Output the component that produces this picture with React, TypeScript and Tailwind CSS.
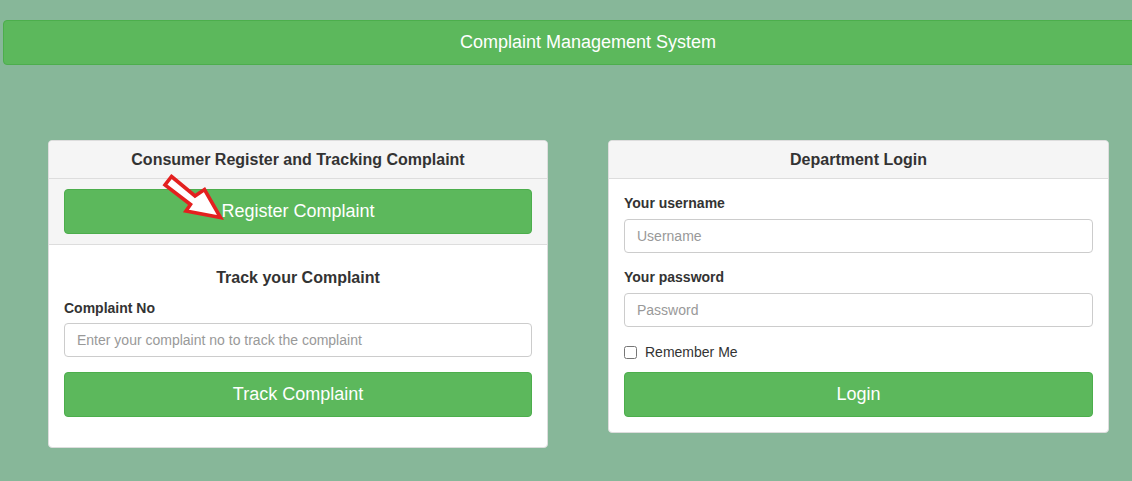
import React from "react";

export default function App() {
  const font = { fontFamily: '"Liberation Sans", Arial, sans-serif' };
  return (
    <div
      className="w-[1132px] h-[481px] overflow-hidden bg-[#87b799] pt-[20px] text-[#333]"
      style={font}
    >
      <div className="ml-[3px] w-[1170px] h-[45px] rounded-[4px] border border-[#4cae4c] bg-[#5cb85c] flex items-center justify-center text-white text-[18px]">
        Complaint Management System
      </div>

      <div className="flex items-start gap-[60px] ml-[48px] mt-[75px]">
        {/* Left panel */}
        <div className="relative w-[500px] rounded-[4px] border border-[#ddd] bg-white">
          <div className="h-[38px] bg-[#f5f5f5] border-b border-[#ddd] rounded-t-[4px] flex items-center justify-center font-bold text-[16px]">
            Consumer Register and Tracking Complaint
          </div>
          <div className="bg-[#f5f5f5] border-b border-[#ddd] px-[15px] pt-[10px] pb-[10px]">
            <button className="w-full h-[45px] rounded-[4px] border border-[#4cae4c] bg-[#5cb85c] text-white text-[18px]">
              Register Complaint
            </button>
          </div>
          <div className="px-[15px] pt-[22px] pb-[30px]">
            <div className="text-center font-bold text-[16px] leading-[22px]">
              Track your Complaint
            </div>
            <div className="mt-[9px] font-bold text-[14px] leading-[20px]">Complaint No</div>
            <input
              className="mt-[5px] w-full h-[34px] rounded-[4px] border border-[#ccc] px-[12px] text-[14px] placeholder:text-[#999] outline-none"
              placeholder="Enter your complaint no to track the complaint"
            />
            <button className="mt-[15px] w-full h-[45px] rounded-[4px] border border-[#4cae4c] bg-[#5cb85c] text-white text-[18px]">
              Track Complaint
            </button>
          </div>
          <svg
            className="absolute left-[105px] top-[29px]"
            width="75"
            height="55"
            viewBox="153 169 75 55"
          >
            <polygon
              points="170.5,175.5 194,195 203.5,188.5 219.5,216.5 185,210 189.5,203.5 164,184"
              fill="white"
              stroke="#e3201f"
              strokeWidth="3.6"
              strokeLinejoin="miter"
            />
          </svg>
        </div>

        {/* Right panel */}
        <div className="w-[501px] rounded-[4px] border border-[#ddd] bg-white">
          <div className="h-[38px] bg-[#f5f5f5] border-b border-[#ddd] rounded-t-[4px] flex items-center justify-center font-bold text-[16px]">
            Department Login
          </div>
          <div className="px-[15px] pt-[14px] pb-[15px]">
            <div className="font-bold text-[14px] leading-[20px]">Your username</div>
            <input
              className="mt-[6px] w-full h-[34px] rounded-[4px] border border-[#ccc] px-[12px] text-[14px] placeholder:text-[#999] outline-none"
              placeholder="Username"
            />
            <div className="mt-[14px] font-bold text-[14px] leading-[20px]">Your password</div>
            <input
              type="password"
              className="mt-[6px] w-full h-[34px] rounded-[4px] border border-[#ccc] px-[12px] text-[14px] placeholder:text-[#999] outline-none"
              placeholder="Password"
            />
            <label className="mt-[15px] flex items-center h-[20px] text-[14px]">
              <input type="checkbox" className="w-[13px] h-[13px] m-0 mr-[8px]" />
              Remember Me
            </label>
            <button className="mt-[10px] w-full h-[45px] rounded-[4px] border border-[#4cae4c] bg-[#5cb85c] text-white text-[18px]">
              Login
            </button>
          </div>
        </div>
      </div>
    </div>
  );
}
